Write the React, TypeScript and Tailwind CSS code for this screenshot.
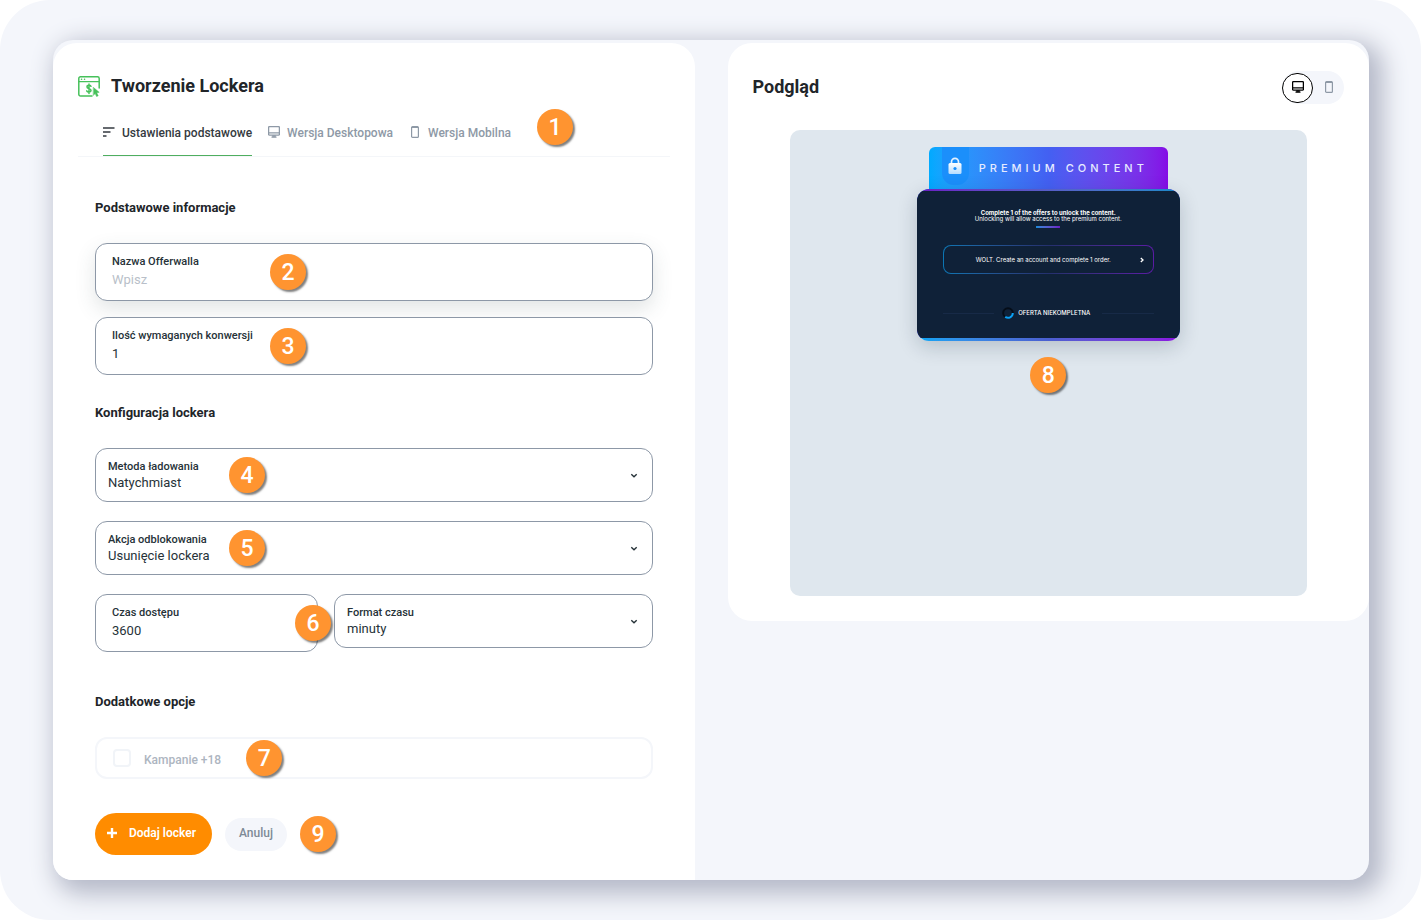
import { useState } from 'react';
import type { ReactNode } from 'react';
import clsx from 'clsx';

type Device = 'desktop' | 'mobile';

function BrowserMoneyIcon() {
  return (
    <svg width="22" height="21" viewBox="0 0 22 21" fill="none" stroke="#46c15a" strokeLinecap="round" strokeLinejoin="round">
      <path d="M14 20H2.500A1.700 1.700 0 0 1 .8 18.300V2.500A1.700 1.700 0 0 1 2.500.8h17A1.700 1.700 0 0 1 21.200 2.500V12" strokeWidth="1.500" />
      <path d="M1 5.600h20" strokeWidth="1.400" />
      <path d="M3.500 3.200h.1M6.500 3.200h.1" strokeWidth="1.500" />
      <path d="M13 10.300c-.4-.7-1.200-1-2-1-1.200 0-2 .6-2 1.600 0 2.300 4 1.100 4 3.400 0 1-.9 1.700-2.100 1.700-1 0-1.800-.4-2.200-1.200M11 8v9.500" strokeWidth="1.500" />
      <path d="M15.500 11.500l5.700 4.800-2.500.5 1.500 3-1.600.8-1.400-3-1.700 1.600z" fill="#46c15a" strokeWidth="0.500" />
    </svg>
  );
}

function SettingsIcon() {
  return (
    <svg className="mb-0.5" width="12" height="12" viewBox="0 0 12 12" fill="none" stroke="currentColor" strokeWidth="1.600">
      <path d="M0 2h11.500M0 6h7.500M0 10h3.500" />
    </svg>
  );
}

function DesktopIcon() {
  return (
    <svg className="mb-0.5" width="12" height="12" viewBox="0 0 12 12" fill="none" stroke="currentColor">
      <rect x="0.600" y="0.600" width="10.800" height="8.600" rx="1" strokeWidth="1.300" />
      <path d="M1 6.900h10" strokeWidth="1.200" />
      <path d="M4.500 9.500h3v1.200h-3z" fill="currentColor" strokeWidth="0.500" />
      <path d="M3.500 11.200h5" strokeWidth="1.200" />
    </svg>
  );
}

function MobileIcon() {
  return (
    <svg className="mb-0.5" width="12" height="12" viewBox="0 0 12 12" fill="none" stroke="currentColor">
      <rect x="2.600" y="0.600" width="6.800" height="10.800" rx="1" strokeWidth="1.200" />
      <path d="M3 1.300h6" strokeWidth="1.500" />
    </svg>
  );
}

function LockIcon() {
  return (
    <svg width="14" height="18" viewBox="0 0 14 18">
      <defs>
        <linearGradient id="lock" x1="0" y1="0" x2="0" y2="1">
          <stop offset="0" stopColor="#fff" />
          <stop offset="1" stopColor="#b5dcff" />
        </linearGradient>
      </defs>
      <path d="M3.500 7V4.800a3.500 3.500 0 0 1 7 0V7" fill="none" stroke="#e3f1ff" strokeWidth="1.700" />
      <rect x="0.500" y="6" width="13" height="11" rx="1.500" fill="url(#lock)" />
      <circle cx="7" cy="11.500" r="1.600" fill="#1b8ffb" />
    </svg>
  );
}

function Badge({ children, className }: { children: ReactNode; className?: string }) {
  return (
    <span
      className={clsx(
        'z-10 flex size-9 shrink-0 items-center justify-center rounded-full bg-[#ff9430] text-[23px] leading-none font-medium text-white shadow-[2px_2px_2px_rgba(0,0,0,0.5)]',
        className
      )}
    >
      {children}
    </span>
  );
}

interface TextFieldProps {
  id: string;
  label: string;
  placeholder?: string;
  defaultValue?: string;
  className?: string;
  badge: ReactNode;
}

function TextField({ id, label, placeholder, defaultValue, className, badge }: TextFieldProps) {
  return (
    <div className={clsx('relative h-[58px] rounded-xl border border-[#8d98a7] bg-white px-4 pt-2.5', className)}>
      <label htmlFor={id} className="block text-[11px] leading-4 font-medium text-[#263238]">
        {label}
      </label>
      <input
        id={id}
        type="text"
        placeholder={placeholder}
        defaultValue={defaultValue}
        className="block h-5 w-full bg-transparent text-[13px] leading-5 text-[#263238] outline-none placeholder:text-[#b9bfc9]"
      />
      {badge}
    </div>
  );
}

interface SelectFieldProps {
  id: string;
  label: string;
  options: string[];
  className?: string;
  badge?: ReactNode;
}

function SelectField({ id, label, options, className, badge }: SelectFieldProps) {
  return (
    <div className={clsx('relative h-[54px] rounded-xl border border-[#8d98a7] bg-white px-3 pt-2.5', className)}>
      <label htmlFor={id} className="block text-[11px] leading-4 font-medium text-[#263238]">
        {label}
      </label>
      <select id={id} className="block h-4 w-full appearance-none bg-transparent text-[13px] leading-4 text-[#263238] outline-none">
        {options.map((option) => (
          <option key={option}>{option}</option>
        ))}
      </select>
      <svg className="pointer-events-none absolute top-6 right-3.5" width="8" height="6" viewBox="0 0 8 6" fill="none" stroke="#263238" strokeWidth="1.400">
        <path d="M1.300 1.300L4 3.800l2.700-2.500" />
      </svg>
      {badge}
    </div>
  );
}

const tabs = [
  { id: 'basic', label: 'Ustawienia podstawowe', icon: <SettingsIcon /> },
  { id: 'desktop', label: 'Wersja Desktopowa', icon: <DesktopIcon /> },
  { id: 'mobile', label: 'Wersja Mobilna', icon: <MobileIcon /> },
];

const devices: { id: Device; label: string; icon: ReactNode }[] = [
  { id: 'desktop', label: 'Desktop', icon: <DesktopIcon /> },
  { id: 'mobile', label: 'Mobile', icon: <MobileIcon /> },
];

function LockerPreview() {
  return (
    <div className="flex w-[263px] flex-col items-center font-['Inter',sans-serif]">
      <div className="flex h-[42px] w-[239px] items-center rounded-t-md bg-linear-to-r from-[#00aaff] via-[#4360f2] to-[#850be6]">
        <div className="ml-[13px] flex h-[38px] w-[27px] items-center justify-center self-start rounded-b-xl bg-[#1b8ffb]">
          <LockIcon />
        </div>
        <span className="ml-[10px] text-[11px] font-medium tracking-[4px] whitespace-nowrap text-[#e6ebff]">PREMIUM CONTENT</span>
      </div>
      <div className="w-full overflow-hidden rounded-xl bg-linear-to-r from-[#00a5f5] via-[#4a5fd0] to-[#8a0be0] pb-[3px] shadow-[0_6px_20px_rgba(15,33,56,0.2)]">
        <div className="bg-linear-to-r from-[#6a1bc4] to-[#1089c9] pt-0.5">
          <div className="flex h-[147px] flex-col items-center bg-[#0f2138] px-[26px] pt-[19px] text-white">
            <p className="text-[6px] leading-[6px] font-bold whitespace-nowrap">Complete 1 of the offers to unlock the content.</p>
            <p className="text-[6px] leading-[6px] whitespace-nowrap">Unlocking will allow access to the premium content.</p>
            <div className="mt-1 h-0.5 w-6 bg-linear-to-r from-[#1089d9] to-[#6a1bc4]" />
            <div className="mt-[17px] w-full rounded-lg bg-linear-to-r from-[#0b76b4] via-[#24306e] to-[#5a1ba4] p-px">
              <button type="button" className="flex h-[27px] w-full items-center justify-center rounded-[7px] bg-[#0f2138] text-[6px]">
                <span className="flex-1 pl-1 text-center">WOLT. Create an account and complete 1 order.</span>
                <svg className="mr-2" width="6" height="6" viewBox="0 0 6 6" fill="none" stroke="#fff" strokeWidth="1.300">
                  <path d="M1.800 1L4 3 1.800 5" />
                </svg>
              </button>
            </div>
            <div className="mt-[33px] flex w-full items-center gap-1">
              <div className="h-px flex-1 bg-[#172a47]" />
              <svg className="ml-1" width="12" height="12" viewBox="0 0 12 12" fill="none" strokeWidth="2">
                <circle cx="6" cy="6" r="4.800" stroke="#050d18" />
                <path d="M10.800 6A4.800 4.800 0 0 1 3.200 9.900" stroke="#0aa0f5" />
              </svg>
              <span className="text-[6px] leading-3 font-medium">OFERTA NIEKOMPLETNA</span>
              <div className="ml-2 h-px flex-1 bg-[#172a47]" />
            </div>
          </div>
        </div>
      </div>
    </div>
  );
}

export default function App() {
  const [activeTab, setActiveTab] = useState('basic');
  const [device, setDevice] = useState<Device>('desktop');

  return (
    <div className="min-h-screen bg-white font-['Roboto',sans-serif] text-[#212529]">
      <div className="min-h-screen rounded-[50px] bg-[#f4f6fb] py-10 pr-[52px] pl-[53px]">
        <main className="grid items-start gap-[33px] overflow-hidden rounded-[20px] bg-[#f4f6fb] pt-[3px] shadow-[8px_8px_24px_6px_#b5b9c8] lg:grid-cols-2">
          <section className="rounded-t-3xl bg-white px-[25px] pt-8 pb-[25px]">
            <div className="flex items-center gap-[11px]">
              <BrowserMoneyIcon />
              <h1 className="text-lg leading-[22px] font-bold">Tworzenie Lockera</h1>
            </div>

            <div className="flex h-[60px] gap-4 border-b border-[#f4f6f9] pl-[25px]">
              {tabs.map((tab) => (
                <button
                  key={tab.id}
                  type="button"
                  onClick={() => setActiveTab(tab.id)}
                  className={clsx(
                    'flex items-center gap-[7px] border-b pt-3.5 text-xs font-medium whitespace-nowrap',
                    activeTab === tab.id ? 'border-[#4fae5f] text-[#343a40]' : 'border-transparent text-[#8e99a6]'
                  )}
                >
                  {tab.icon}
                  {tab.label}
                </button>
              ))}
              <Badge className="mt-3 ml-2.5">1</Badge>
            </div>

            <form className="px-[17px] pt-10" onSubmit={(e) => e.preventDefault()}>
              <h2 className="text-[13px] leading-[22px] font-bold">Podstawowe informacje</h2>
              <div className="mt-6 grid gap-4">
                <TextField
                  id="name"
                  label="Nazwa Offerwalla"
                  placeholder="Wpisz"
                  className="shadow-[0_8px_20px_rgba(60,80,80,0.15)]"
                  badge={<Badge className="absolute top-1/2 left-[174px] -translate-y-1/2">2</Badge>}
                />
                <TextField
                  id="conversions"
                  label="Ilość wymaganych konwersji"
                  defaultValue="1"
                  badge={<Badge className="absolute top-1/2 left-[174px] -translate-y-1/2">3</Badge>}
                />
              </div>

              <h2 className="mt-[27px] text-[13px] leading-[22px] font-bold">Konfiguracja lockera</h2>
              <div className="mt-6 grid gap-[19px]">
                <SelectField
                  id="method"
                  label="Metoda ładowania"
                  options={['Natychmiast']}
                  badge={<Badge className="absolute top-1/2 left-[133px] -translate-y-1/2">4</Badge>}
                />
                <SelectField
                  id="action"
                  label="Akcja odblokowania"
                  options={['Usunięcie lockera']}
                  badge={<Badge className="absolute top-1/2 left-[133px] -translate-y-1/2">5</Badge>}
                />
                <div className="flex items-start gap-4">
                  <TextField
                    id="time"
                    label="Czas dostępu"
                    defaultValue="3600"
                    className="w-2/5"
                    badge={<Badge className="absolute top-1/2 -right-3.5 -translate-y-1/2">6</Badge>}
                  />
                  <SelectField id="format" label="Format czasu" options={['minuty', 'godziny']} className="flex-1" />
                </div>
              </div>

              <h2 className="mt-[39px] text-[13px] leading-[22px] font-bold">Dodatkowe opcje</h2>
              <div className="mt-6 flex h-[42px] items-center rounded-xl border-2 border-[#f4f6fa] pl-4">
                <input id="adult" type="checkbox" className="size-[18px] appearance-none rounded border-2 border-[#f1f4f8] bg-white checked:bg-[#ff8c00]" />
                <label htmlFor="adult" className="ml-[13px] pt-1 text-xs font-medium text-[#adb5bf]">
                  Kampanie +18
                </label>
                <Badge className="ml-[25px]">7</Badge>
              </div>

              <div className="mt-[34px] flex items-center gap-[13px]">
                <button type="submit" className="flex h-[42px] items-center gap-3 rounded-full bg-[#ff8c00] px-3 pr-4 pb-0.5 text-xs font-semibold text-white">
                  <svg width="10" height="10" viewBox="0 0 10 10" stroke="currentColor" strokeWidth="2.400">
                    <path d="M5 0v10M0 5h10" />
                  </svg>
                  Dodaj locker
                </button>
                <button type="button" className="h-[33px] rounded-full bg-[#f4f6fb] px-3.5 pb-0.5 text-xs font-medium text-[#7e8a96]">
                  Anuluj
                </button>
                <Badge>9</Badge>
              </div>
            </form>
          </section>

          <section className="rounded-3xl bg-white px-[25px] pt-7 pb-[25px]">
            <div className="flex items-center justify-between">
              <h2 className="pb-0.5 text-lg leading-[22px] font-bold">Podgląd</h2>
              <div className="flex h-[33px] items-center rounded-full bg-[#f4f6fb]">
                {devices.map((item) => (
                  <button
                    key={item.id}
                    type="button"
                    aria-label={item.label}
                    onClick={() => setDevice(item.id)}
                    className={clsx(
                      'flex h-[30px] w-[31px] items-center justify-center rounded-full',
                      device === item.id ? 'border border-black bg-white text-black' : 'text-[#8e99a6]'
                    )}
                  >
                    {item.icon}
                  </button>
                ))}
              </div>
            </div>
            <div className="mx-[37px] mt-[26px] flex h-[466px] flex-col items-center rounded-[10px] bg-[#dfe7ee] pt-[17px]">
              <LockerPreview />
              <Badge className="mt-4">8</Badge>
            </div>
          </section>
        </main>
      </div>
    </div>
  );
}
